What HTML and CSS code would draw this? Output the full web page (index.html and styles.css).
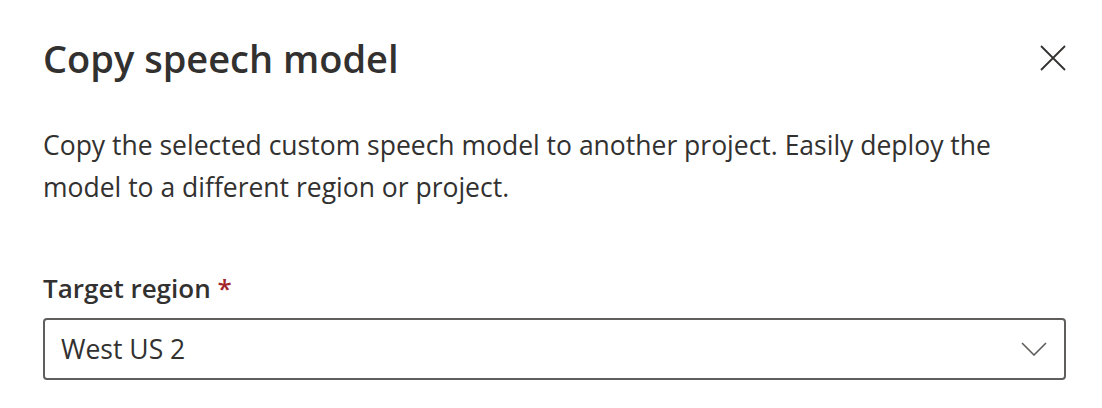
FILE: index.html
```html
<!DOCTYPE html>
<html>
<head>
<meta charset="utf-8">
<link rel="stylesheet" href="styles.css">
</head>
<body>
<div class="panel">
  <div class="header">
    <h1 class="title">Copy speech model</h1>
    <button class="close" aria-label="Close">
      <svg width="26" height="26" viewBox="0 0 26 26"><path d="M1 1 L25 25 M25 1 L1 25" stroke="#323130" stroke-width="1.8" fill="none"/></svg>
    </button>
  </div>
  <p class="desc">Copy the selected custom speech model to another project. Easily deploy the model to a different region or project.</p>
  <div class="field">
    <label class="label">Target region <span class="req">*</span></label>
    <div class="dropdown">
      <span class="value">West US 2</span>
      <svg class="chev" width="26" height="14" viewBox="0 0 26 14"><path d="M1 1 L13 13 L25 1" stroke="#605e5c" stroke-width="1.6" fill="none"/></svg>
    </div>
  </div>
</div>
</body>
</html>
```
FILE: styles.css
```css
html, body {
  margin: 0;
  padding: 0;
  background: #ffffff;
}
body {
  font-family: "Open Sans", "Noto Sans", sans-serif;
  color: #323130;
}
.panel {
  width: 1102px;
  height: 408px;
  box-sizing: border-box;
  padding: 32px 36px 0 43px;
  display: flex;
  flex-direction: column;
}
.header {
  display: flex;
  justify-content: space-between;
  align-items: center;
}
.title {
  margin: 0;
  font-size: 38px;
  line-height: 52px;
  font-weight: 600;
}
.close {
  border: 0;
  background: none;
  padding: 0;
  margin-right: -1px;
  width: 28px;
  height: 28px;
  display: flex;
  align-items: center;
  justify-content: center;
}
.desc {
  margin: 40px 0 0 0;
  font-size: 26.5px;
  line-height: 42px;
  max-width: 1000px;
}
.field {
  margin-top: 62px;
  display: flex;
  flex-direction: column;
}
.label {
  font-size: 26px;
  line-height: 36px;
  font-weight: 600;
}
.req {
  color: #a4262c;
}
.dropdown {
  margin-top: 12px;
  height: 62px;
  box-sizing: border-box;
  border: 2px solid #605e5c;
  border-radius: 4px;
  display: flex;
  align-items: center;
  justify-content: space-between;
  padding: 0 17px 0 16px;
}
.value {
  font-size: 26.5px;
}
.chev {
  display: block;
}
```
